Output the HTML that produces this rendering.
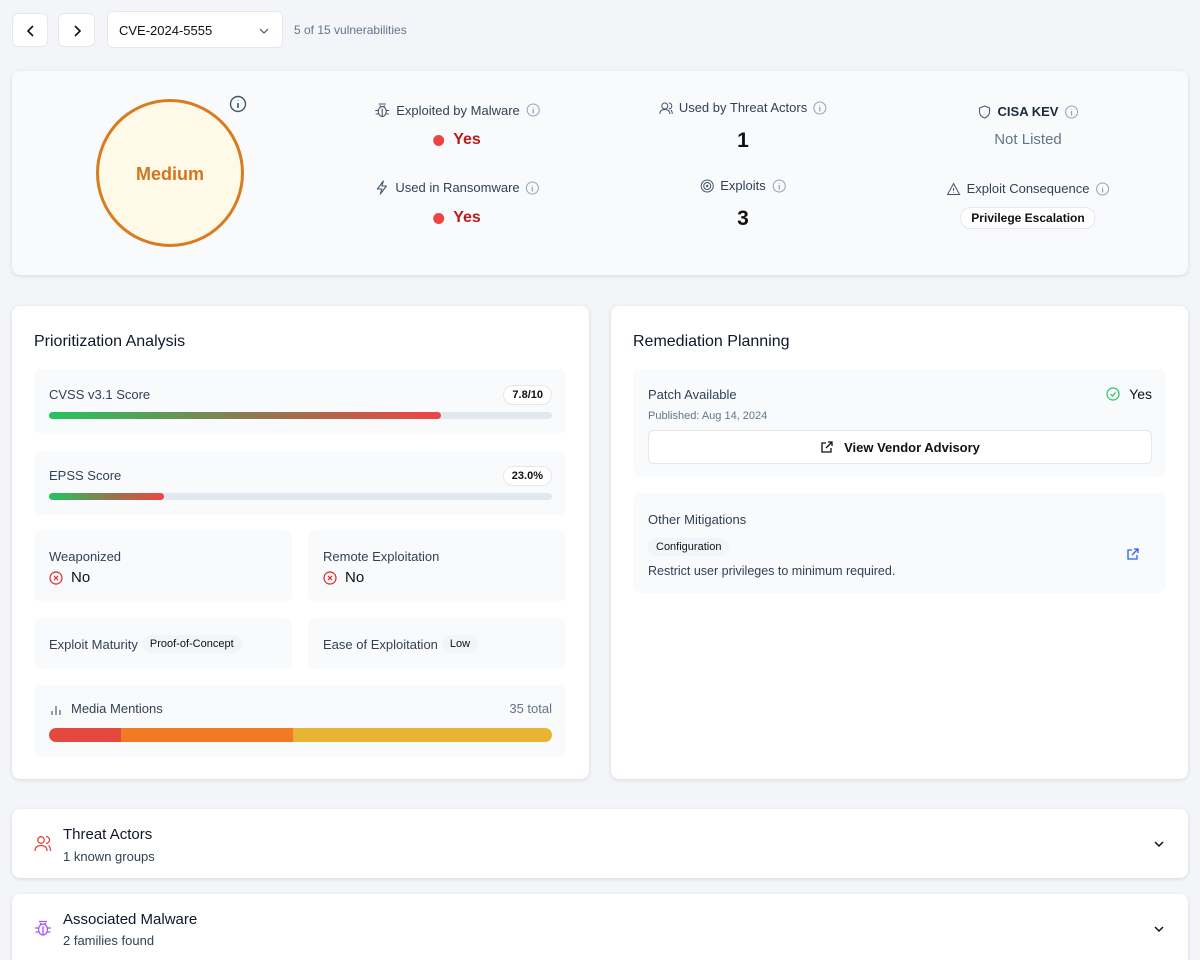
<!DOCTYPE html>
<html style="overflow:hidden"><head><meta charset="utf-8"><style>
*{box-sizing:border-box;margin:0;padding:0}
html,body{width:1200px;height:960px;overflow:hidden}
body{background:#f3f5f8;font-family:"Liberation Sans",sans-serif;color:#1e293b;position:relative}
.a{position:absolute}
.btn{background:#fff;border:1px solid #e5e7eb;border-radius:6px}
.card{background:#fff;border-radius:8px;box-shadow:0 1px 4px rgba(0,0,0,.12)}
.box{background:#f8fafc;border-radius:8px}
.t13{font-size:13px;color:#334155}
.pill{background:#fff;border:1px solid #e5e7eb;border-radius:10px;font-size:11px;font-weight:bold;color:#111;padding:3px 8px}
.tag{background:#f1f5f9;border-radius:10px;font-size:11px;color:#111;padding:3px 8px}
.lbl{font-size:13px;color:#334155;display:flex;align-items:center;gap:6px;white-space:nowrap}
svg{display:block}
.c{transform:translateX(-50%)}
</style></head><body>
<div class="a btn" style="left:12px;top:13px;width:36px;height:34px"><svg width="36" height="34"><path d="M20 12l-5 5 5 5" fill="none" stroke="#111" stroke-width="1.6"/></svg></div>
<div class="a btn" style="left:58px;top:13px;width:37px;height:34px"><svg width="36" height="34"><path d="M16 12l5 5-5 5" fill="none" stroke="#111" stroke-width="1.6"/></svg></div>
<div class="a btn" style="left:107px;top:11px;width:176px;height:37px"><span class="a" style="left:11px;top:11px;font-size:13px;color:#111">CVE-2024-5555</span><svg class="a" style="left:150px;top:14px" width="12" height="10"><path d="M2 3l4 4 4-4" fill="none" stroke="#555" stroke-width="1.2"/></svg></div>
<span class="a" style="left:294px;top:23px;font-size:12px;color:#64748b">5 of 15 vulnerabilities</span>

<div class="a" style="left:12px;top:71px;width:1176px;height:204px;background:#f8fafc;border-radius:8px;box-shadow:0 1px 4px rgba(0,0,0,.12)"></div>
<div class="a" style="left:96px;top:99px;width:148px;height:148px;border-radius:50%;border:3px solid #d97b1f;background:#fff9e8"></div>
<span class="a c" style="left:170px;top:164px;font-size:18px;font-weight:bold;color:#d0761e">Medium</span>
<svg class="a" style="left:229px;top:95px" width="18" height="18"><circle cx="9" cy="9" r="7.5" fill="none" stroke="#475569" stroke-width="1.4"/><path d="M9 8v5M9 5.5v.5" stroke="#475569" stroke-width="1.6"/></svg>

<div class="a lbl c" style="left:457px;top:102px"><svg width="16" height="16"><ellipse cx="8" cy="9.5" rx="4" ry="5" fill="none" stroke="#475569" stroke-width="1.1"/><path d="M5.5 3.5l1.5 1.5M10.5 3.5L9 5M4 8.5H1M15 8.5h-3M4 12H1.5M14.5 12H12M8 6.5v8M4.5 2h7" fill="none" stroke="#475569" stroke-width="1.1"/></svg><span>Exploited by Malware</span><svg width="14" height="14"><circle cx="7" cy="7" r="6" fill="none" stroke="#94a3b8"/><path d="M7 6v4.5M7 4v.5" stroke="#94a3b8" stroke-width="1.2"/></svg></div>
<div class="a c" style="left:457px;top:131px;font-size:16px;font-weight:bold;color:#b91c1c;display:flex;align-items:center;gap:9px"><i style="width:11px;height:11px;border-radius:50%;background:#ef4444;display:block"></i>Yes</div>
<div class="a lbl c" style="left:457px;top:180px"><svg width="15" height="15"><path d="M9 1L3 9h4.5L6 14l6-8H7.5z" fill="none" stroke="#475569" stroke-width="1.1" stroke-linejoin="round"/></svg><span>Used in Ransomware</span><svg width="14" height="14"><circle cx="7" cy="7" r="6" fill="none" stroke="#94a3b8"/><path d="M7 6v4.5M7 4v.5" stroke="#94a3b8" stroke-width="1.2"/></svg></div>
<div class="a c" style="left:457px;top:209px;font-size:16px;font-weight:bold;color:#b91c1c;display:flex;align-items:center;gap:9px"><i style="width:11px;height:11px;border-radius:50%;background:#ef4444;display:block"></i>Yes</div>

<div class="a lbl c" style="left:743px;top:100px"><svg width="14" height="14"><circle cx="6" cy="5" r="3" fill="none" stroke="#475569"/><path d="M1 13c0-3 2-4.5 5-4.5s5 1.5 5 4.5M10 2a3 3 0 010 6M12 9c1 1 1.5 2 1.5 4" fill="none" stroke="#475569"/></svg><span>Used by Threat Actors</span><svg width="14" height="14"><circle cx="7" cy="7" r="6" fill="none" stroke="#94a3b8"/><path d="M7 6v4.5M7 4v.5" stroke="#94a3b8" stroke-width="1.2"/></svg></div>
<div class="a c" style="left:743px;top:129px;font-size:21px;font-weight:bold;color:#111">1</div>
<div class="a lbl c" style="left:743px;top:178px"><svg width="14" height="14"><circle cx="7" cy="7" r="6" fill="none" stroke="#475569"/><circle cx="7" cy="7" r="3.5" fill="none" stroke="#475569"/><circle cx="7" cy="7" r="1.2" fill="#475569"/></svg><span>Exploits</span><svg width="14" height="14"><circle cx="7" cy="7" r="6" fill="none" stroke="#94a3b8"/><path d="M7 6v4.5M7 4v.5" stroke="#94a3b8" stroke-width="1.2"/></svg></div>
<div class="a c" style="left:743px;top:207px;font-size:21px;font-weight:bold;color:#111">3</div>

<div class="a lbl c" style="left:1028px;top:104px"><svg width="14" height="14"><path d="M7 1l5 2v4c0 3-2.5 5-5 6-2.5-1-5-3-5-6V3z" fill="none" stroke="#475569"/></svg><span style="font-weight:bold;color:#1e293b">CISA KEV</span><svg width="14" height="14"><circle cx="7" cy="7" r="6" fill="none" stroke="#94a3b8"/><path d="M7 6v4.5M7 4v.5" stroke="#94a3b8" stroke-width="1.2"/></svg></div>
<div class="a c" style="left:1028px;top:131px;font-size:15px;color:#64748b;white-space:nowrap">Not Listed</div>
<div class="a lbl c" style="left:1028px;top:181px"><svg width="14" height="14"><path d="M7 1.5l6 11H1z M7 6v3M7 10.5v.5" fill="none" stroke="#475569"/></svg><span>Exploit Consequence</span><svg width="14" height="14"><circle cx="7" cy="7" r="6" fill="none" stroke="#94a3b8"/><path d="M7 6v4.5M7 4v.5" stroke="#94a3b8" stroke-width="1.2"/></svg></div>
<div class="a c pill" style="left:1028px;top:207px;font-size:12px;padding:3px 10px;white-space:nowrap">Privilege Escalation</div>

<div class="a card" style="left:12px;top:306px;width:577px;height:473px"></div>
<span class="a" style="left:34px;top:333px;font-size:16px;color:#0f172a">Prioritization Analysis</span>
<div class="a box" style="left:34px;top:369px;width:532px;height:65px"></div>
<span class="a t13" style="left:49px;top:387px">CVSS v3.1 Score</span>
<span class="a pill" style="right:648px;top:385px">7.8/10</span>
<div class="a" style="left:49px;top:412px;width:503px;height:7px;border-radius:4px;background:#e2e8f0"><div style="width:392px;height:7px;border-radius:4px;background:linear-gradient(90deg,#22c55e,#8a7c4f 50%,#ef4444)"></div></div>
<div class="a box" style="left:34px;top:451px;width:532px;height:64px"></div>
<span class="a t13" style="left:49px;top:468px">EPSS Score</span>
<span class="a pill" style="right:648px;top:466px">23.0%</span>
<div class="a" style="left:49px;top:493px;width:503px;height:7px;border-radius:4px;background:#e2e8f0"><div style="width:115px;height:7px;border-radius:4px;background:linear-gradient(90deg,#22c55e,#8a7c4f 50%,#ef4444)"></div></div>
<div class="a box" style="left:34px;top:530px;width:258px;height:72px"></div>
<div class="a box" style="left:308px;top:530px;width:258px;height:72px"></div>
<span class="a t13" style="left:49px;top:549px">Weaponized</span>
<span class="a t13" style="left:323px;top:549px">Remote Exploitation</span>
<div class="a" style="left:49px;top:569px;display:flex;gap:8px;align-items:center;font-size:15px;color:#111"><svg width="14" height="14"><circle cx="7" cy="7" r="6" fill="none" stroke="#dc2626" stroke-width="1.2"/><path d="M5 5l4 4M9 5l-4 4" stroke="#dc2626" stroke-width="1.2"/></svg>No</div>
<div class="a" style="left:323px;top:569px;display:flex;gap:8px;align-items:center;font-size:15px;color:#111"><svg width="14" height="14"><circle cx="7" cy="7" r="6" fill="none" stroke="#dc2626" stroke-width="1.2"/><path d="M5 5l4 4M9 5l-4 4" stroke="#dc2626" stroke-width="1.2"/></svg>No</div>
<div class="a box" style="left:34px;top:618px;width:258px;height:51px"></div>
<div class="a box" style="left:308px;top:618px;width:258px;height:51px"></div>
<div class="a" style="left:49px;top:635px;display:flex;gap:4px;align-items:center"><span class="t13">Exploit Maturity</span><span class="tag">Proof-of-Concept</span></div>
<div class="a" style="left:323px;top:635px;display:flex;gap:4px;align-items:center"><span class="t13">Ease of Exploitation</span><span class="tag">Low</span></div>
<div class="a box" style="left:34px;top:685px;width:532px;height:72px"></div>
<div class="a" style="left:49px;top:701px;display:flex;gap:8px;align-items:center"><svg width="14" height="12"><path d="M3 12V8M7 12V3M11 12V7" stroke="#64748b" stroke-width="1.4"/></svg><span class="t13">Media Mentions</span></div>
<span class="a" style="right:648px;top:701px;font-size:13px;color:#64748b">35 total</span>
<div class="a" style="left:49px;top:728px;width:503px;height:14px;border-radius:7px;overflow:hidden;display:flex"><i style="width:72px;background:#e5483f"></i><i style="width:172px;background:#f27a25"></i><i style="flex:1;background:#e7b531"></i></div>

<div class="a card" style="left:611px;top:306px;width:577px;height:473px"></div>
<span class="a" style="left:633px;top:333px;font-size:16px;color:#0f172a">Remediation Planning</span>
<div class="a box" style="left:633px;top:369px;width:533px;height:108px"></div>
<span class="a t13" style="left:648px;top:387px">Patch Available</span>
<div class="a" style="right:48px;top:386px;display:flex;gap:9px;align-items:center;font-size:14px;color:#111"><svg width="14" height="14"><circle cx="7" cy="7" r="6" fill="none" stroke="#22c55e" stroke-width="1.2"/><path d="M4.5 7l2 2 3-3.5" fill="none" stroke="#22c55e" stroke-width="1.2"/></svg>Yes</div>
<span class="a" style="left:648px;top:410px;font-size:11px;color:#64748b">Published: Aug 14, 2024</span>
<div class="a btn" style="left:648px;top:430px;width:504px;height:34px;display:flex;justify-content:center;align-items:center;gap:10px;font-size:13px;font-weight:bold;color:#111"><svg width="14" height="14"><path d="M11 8v4H2V3h4M8 2h4v4M12 2L6 8" fill="none" stroke="#111" stroke-width="1.3"/></svg>View Vendor Advisory</div>
<div class="a box" style="left:633px;top:493px;width:533px;height:100px"></div>
<span class="a t13" style="left:648px;top:512px">Other Mitigations</span>
<span class="a tag" style="left:648px;top:538px">Configuration</span>
<span class="a" style="left:648px;top:564px;font-size:12.5px;color:#334155">Restrict user privileges to minimum required.</span>
<svg class="a" style="left:1126px;top:547px" width="14" height="14"><path d="M11 8v4H2V3h4M8 2h4v4M12 2L6 8" fill="none" stroke="#2563eb" stroke-width="1.3"/></svg>

<div class="a card" style="left:12px;top:809px;width:1176px;height:69px"></div>
<svg class="a" style="left:34px;top:835px" width="18" height="17"><circle cx="7" cy="5" r="3.3" fill="none" stroke="#dc4a3d" stroke-width="1.3"/><path d="M1 16c0-4 2.5-5.5 6-5.5s6 1.5 6 5.5M12 1.5a3.4 3.4 0 010 7M14.5 10.5c1.5 1 2 3 2 5.5" fill="none" stroke="#dc4a3d" stroke-width="1.3"/></svg>
<span class="a" style="left:63px;top:826px;font-size:15px;color:#0f172a">Threat Actors</span>
<span class="a" style="left:63px;top:849px;font-size:13px;color:#334155">1 known groups</span>
<svg class="a" style="left:1153px;top:839px" width="12" height="10"><path d="M2 3l4 4 4-4" fill="none" stroke="#111" stroke-width="1.5"/></svg>
<div class="a card" style="left:12px;top:894px;width:1176px;height:80px"></div>
<svg class="a" style="left:34px;top:919px" width="18" height="18"><ellipse cx="9" cy="10.5" rx="4.5" ry="5.5" fill="none" stroke="#a855f7" stroke-width="1.3"/><path d="M6 4l1.5 1.5M12 4l-1.5 1.5M4.5 9H1M17 9h-3.5M4.5 13H1.5M16.5 13h-3M9 7v9M5 2.5h8" fill="none" stroke="#a855f7" stroke-width="1.3"/></svg>
<span class="a" style="left:63px;top:911px;font-size:15px;color:#0f172a">Associated Malware</span>
<span class="a" style="left:63px;top:933px;font-size:13px;color:#334155">2 families found</span>
<svg class="a" style="left:1153px;top:924px" width="12" height="10"><path d="M2 3l4 4 4-4" fill="none" stroke="#111" stroke-width="1.5"/></svg>
</body></html>
